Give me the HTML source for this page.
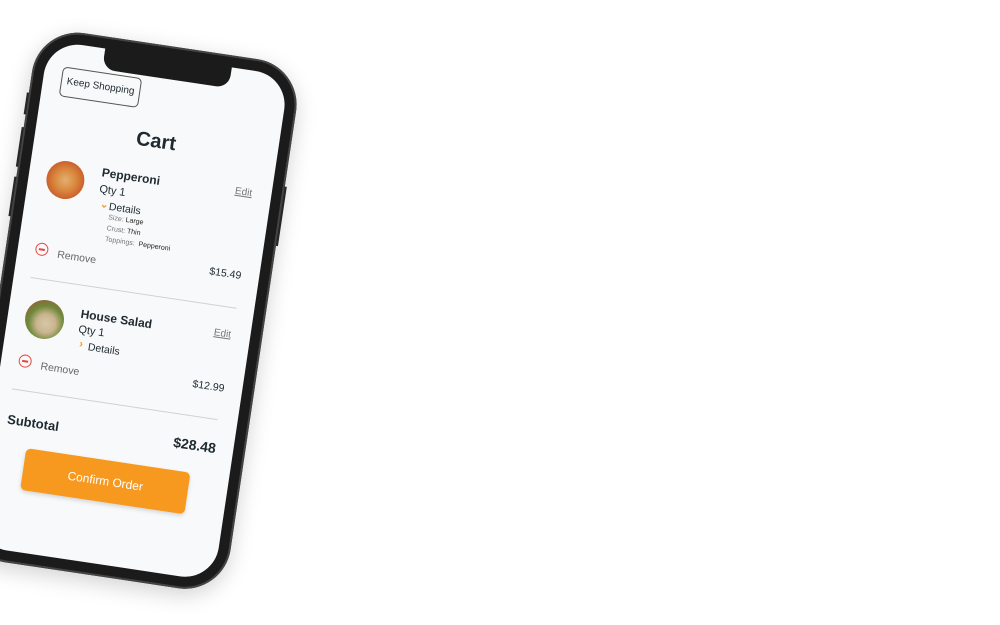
<!DOCTYPE html>
<html><head><meta charset="utf-8"><style>
html,body{margin:0;padding:0;width:1000px;height:625px;overflow:hidden;background:#fff;font-family:"Liberation Sans",sans-serif;}
#w{position:absolute;left:156px;top:142px;width:0;height:0;transform:rotate(8.5deg);transform-origin:0 0;}
#w div{position:absolute;}
.c{transform:translate(-50%,-50%);white-space:nowrap;}
.l{transform:translateY(-50%);white-space:nowrap;}
.phone{left:-133px;top:-97px;width:267px;height:535px;border-radius:46px;background:#1b1b1b;box-shadow:0 6px 22px rgba(0,0,0,.18),inset 0 0 0 2px #444;}
.screen{left:-121px;top:-85px;width:243px;height:511px;border-radius:34px;background:#f8f9fa;}
.notch{left:-64px;top:-86px;width:128px;height:22px;background:#1b1b1b;border-radius:0 0 13px 13px;}
.btn{background:#2a2a2a;width:3px;}
.t{color:#1e2a30;}
.sep{height:1px;background:#cfd2d4;}
</style></head><body>
<div id="w">
  <div class="btn" style="left:-135px;top:-30px;height:22px"></div>
  <div class="btn" style="left:-135px;top:5px;height:40px"></div>
  <div class="btn" style="left:-135px;top:55px;height:40px"></div>
  <div class="btn" style="left:133px;top:25px;height:60px"></div>
  <div class="phone"></div>
  <div class="screen"></div>
  <div class="notch"></div>

  <div class="c t" style="left:-63px;top:-46px;width:78px;height:28px;border:1px solid #555;border-radius:5px;font-size:10px;line-height:28px;text-align:center;">Keep Shopping</div>
  <div class="c t" style="left:0;top:0;font-size:20px;font-weight:bold;">Cart</div>

  <div class="c" style="left:-84px;top:51px;width:38px;height:38px;border-radius:50%;background:radial-gradient(circle,#e3b070 0,#d9883e 40%,#c95a2a 75%,#e7a25a 88%,#d78a46 100%);"></div>
  <div class="l t" style="left:-49px;top:38px;font-size:12px;font-weight:bold;">Pepperoni</div>
  <div class="l t" style="left:-49px;top:55px;font-size:11px;">Qty 1</div>
  <div class="l" style="left:-46px;top:70px;font-size:10px;color:#f7991f;font-weight:bold;">&#8964;</div>
  <div class="l t" style="left:-37px;top:71px;font-size:10.5px;">Details</div>
  <div class="l" style="left:-36px;top:82px;font-size:7px;color:#777;">Size: <span style="color:#222">Large</span></div>
  <div class="l" style="left:-36px;top:93px;font-size:7px;color:#777;">Crust: <span style="color:#222">Thin</span></div>
  <div class="l" style="left:-36px;top:104px;font-size:7px;color:#777;">Toppings: &nbsp;<span style="color:#222">Pepperoni</span></div>
  <div class="c" style="left:-97px;top:123px;width:11px;height:11px;border:1.5px solid #e8453c;border-radius:50%;"></div>
  <div class="c" style="left:-97px;top:123px;width:6px;height:1.5px;background:#e8453c;"></div>
  <div class="l" style="left:-81px;top:126px;font-size:10.5px;color:#666;">Remove</div>
  <div class="c" style="left:94px;top:37px;font-size:10px;color:#777;text-decoration:underline;">Edit</div>
  <div class="c t" style="left:88px;top:120px;font-size:10.5px;">$15.49</div>
  <div class="sep" style="left:-104px;top:152px;width:208px;"></div>

  <div class="c" style="left:-84px;top:192px;width:39px;height:39px;border-radius:50%;background:radial-gradient(circle at 55% 60%,#d8c7a8 0,#c9b48e 30%,#6f8a3a 55%,#8a6a3a 75%,#a38a62 92%,#7b6a50 100%);"></div>
  <div class="l t" style="left:-49px;top:181px;font-size:12px;font-weight:bold;">House Salad</div>
  <div class="l t" style="left:-49px;top:197px;font-size:11px;">Qty 1</div>
  <div class="l" style="left:-46px;top:211px;font-size:11px;color:#f7991f;font-weight:bold;">&#8250;</div>
  <div class="l t" style="left:-37px;top:213px;font-size:10.5px;">Details</div>
  <div class="c" style="left:-97px;top:236px;width:11px;height:11px;border:1.5px solid #e8453c;border-radius:50%;"></div>
  <div class="c" style="left:-97px;top:236px;width:6px;height:1.5px;background:#e8453c;"></div>
  <div class="l" style="left:-81px;top:239px;font-size:10.5px;color:#666;">Remove</div>
  <div class="c" style="left:94px;top:180px;font-size:10px;color:#777;text-decoration:underline;">Edit</div>
  <div class="c t" style="left:88px;top:234px;font-size:10.5px;">$12.99</div>
  <div class="sep" style="left:-106px;top:265px;width:208px;"></div>

  <div class="c t" style="left:-80px;top:296px;font-size:13px;font-weight:bold;">Subtotal</div>
  <div class="c t" style="left:83px;top:294px;font-size:14px;font-weight:bold;">$28.48</div>
  <div class="c" style="left:0;top:343px;width:166px;height:42px;border-radius:5px;background:#f7991f;color:#fff;font-size:12px;line-height:42px;text-align:center;box-shadow:0 2px 4px rgba(0,0,0,.15);">Confirm Order</div>
</div>
</body></html>
